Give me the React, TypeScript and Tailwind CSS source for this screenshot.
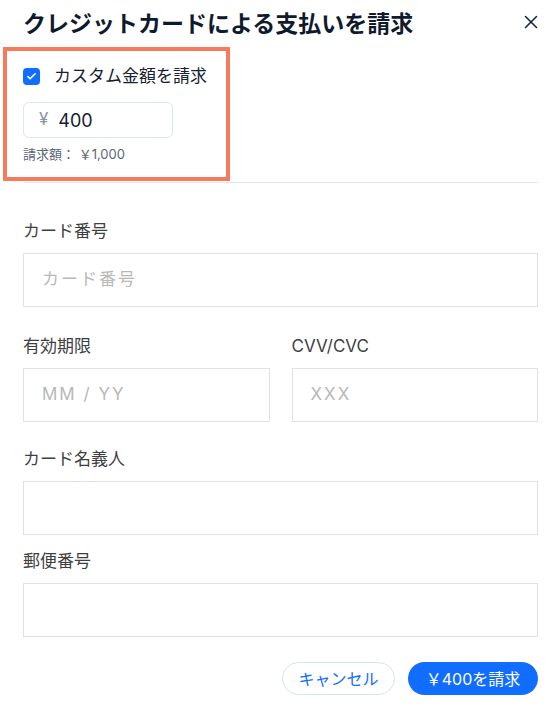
import { Check, X } from "lucide-react";

const font = { fontFamily: '"Inter", "Noto Sans CJK JP", sans-serif' };

function Field({ label, placeholder, className = "" }: { label: string; placeholder?: string; className?: string }) {
  return (
    <div className={className}>
      <div className="text-[17px] leading-6 text-[#3f3f3f]">{label}</div>
      <div className="mt-[10px] h-[54px] border border-[#e1e1e1] flex items-center px-[18px] text-[17px] tracking-[2px] text-[#b8b8b8]">
        {placeholder}
      </div>
    </div>
  );
}

export default function App() {
  return (
    <div className="relative w-[560px] h-[714px] bg-white px-[23px] pr-[22px]" style={font}>
      {/* header */}
      <div className="flex items-start justify-between pt-[9px]">
        <h1 className="text-[23px] leading-[30px] font-bold text-[#0f1b2d]">クレジットカードによる支払いを請求</h1>
        <button className="mt-[2px] -mr-[4px] text-[#15253a]">
          <X className="h-[22px] w-[22px]" strokeWidth={1.7} />
        </button>
      </div>

      {/* custom amount */}
      <div className="mt-[25px] flex items-center gap-[14px]">
        <div className="h-[17px] w-[17px] rounded-[4px] bg-[#116dff] flex items-center justify-center">
          <Check className="h-[11px] w-[11px] text-white" strokeWidth={3.5} />
        </div>
        <span className="text-[17px] leading-6 text-[#162032]">カスタム金額を請求</span>
      </div>
      <div className="mt-[14px] h-[36px] w-[150px] rounded-[6px] border border-[#dde7f5] flex items-center px-[15px] gap-[10px]">
        <span className="text-[17px] text-[#8b95a3]">¥</span>
        <span className="text-[18px] text-[#162032]">400</span>
      </div>
      <div className="mt-[8px] text-[13px] leading-4 text-[#5b6675]">請求額： ￥1,000</div>

      <div className="mt-[20px] border-t border-[#e6e6e6]" />

      {/* card form */}
      <Field className="mt-[36px]" label="カード番号" placeholder="カード番号" />
      <div className="mt-[27px] grid grid-cols-2 gap-[22px]">
        <Field label="有効期限" placeholder="MM / YY" />
        <Field label="CVV/CVC" placeholder="XXX" />
      </div>
      <Field className="mt-[25px]" label="カード名義人" />
      <Field className="mt-[14px]" label="郵便番号" />

      {/* actions */}
      <div className="mt-[25px] flex justify-end gap-[13px]">
        <button className="h-[33px] w-[113px] rounded-full border border-[#d6e3f7] text-[16px] text-[#116dff]">キャンセル</button>
        <button className="h-[33px] w-[130px] rounded-full bg-[#116dff] text-[16px] text-white">￥400を請求</button>
      </div>

      {/* highlight */}
      <div className="absolute left-[3px] top-[47px] w-[227px] h-[134px] border-[4px] border-[#f47b5c] pointer-events-none" />
    </div>
  );
}
